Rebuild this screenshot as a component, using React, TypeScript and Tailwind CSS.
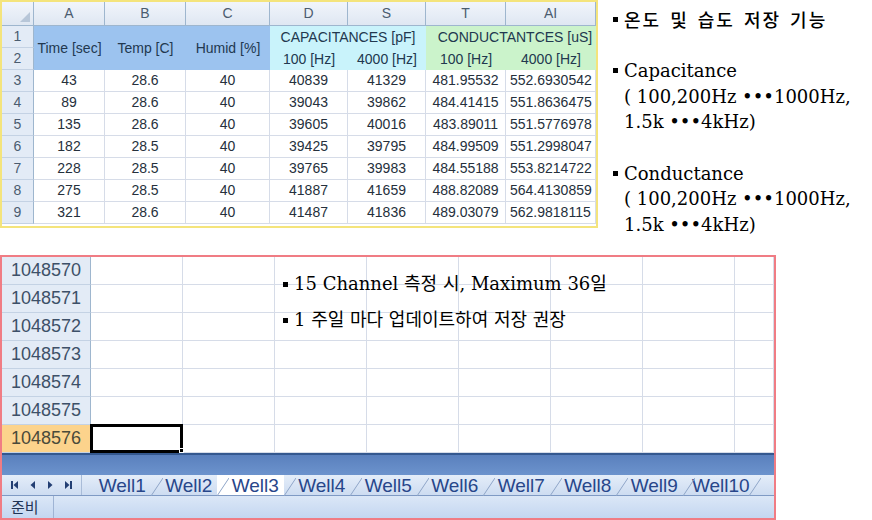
const SANS = "font-['Liberation_Sans',Arial,sans-serif]";

const TOP_ROWS = [
  ["3", "43", "28.6", "40", "40839", "41329", "481.95532", "552.6930542"],
  ["4", "89", "28.6", "40", "39043", "39862", "484.41415", "551.8636475"],
  ["5", "135", "28.6", "40", "39605", "40016", "483.89011", "551.5776978"],
  ["6", "182", "28.5", "40", "39425", "39795", "484.99509", "551.2998047"],
  ["7", "228", "28.5", "40", "39765", "39983", "484.55188", "553.8214722"],
  ["8", "275", "28.5", "40", "41887", "41659", "488.82089", "564.4130859"],
  ["9", "321", "28.6", "40", "41487", "41836", "489.03079", "562.9818115"],
];

const BOTTOM_ROWS = ["1048570", "1048571", "1048572", "1048573", "1048574", "1048575", "1048576"];

const TABS = ["Well1", "Well2", "Well3", "Well4", "Well5", "Well6", "Well7", "Well8", "Well9", "Well10"];

function Bullet() {
  return <span className="mr-[6px] inline-block h-[5px] w-[5px] shrink-0 bg-black" />;
}

function TopSheet() {
  const colHead = "flex items-center justify-center border-r border-b border-[#9eb6ce] bg-gradient-to-b from-[#f1f5fb] to-[#dfe7f2] text-[14px] text-[#4b5c70]";
  const rowHead = "flex items-center justify-center border-r border-b border-r-[#9eb6ce] border-b-[#c4d2e4] bg-[#e3ebf6] text-[14px] text-[#4b5c70]";
  const cell = "flex items-center justify-center border-r border-b border-[#d6dce8] bg-white text-[14px] text-[#25303c]";
  const head = "flex items-center justify-center text-[14px] text-[#22384f]";
  return (
    <div
      className={`grid h-[228px] w-[598px] shrink-0 grid-cols-[32px_71px_81px_84px_78px_78px_80px_90px] grid-rows-[24px_repeat(9,22px)] overflow-hidden border-2 border-[#f4e47c] ${SANS}`}
    >
      <div className={`${colHead} relative`}>
        <svg width="10" height="10" viewBox="0 0 10 10" className="absolute right-[3px] bottom-[3px]">
          <polygon points="10,0 10,10 0,10" fill="#b7c6d8" />
        </svg>
      </div>
      {["A", "B", "C", "D", "S", "T", "AI"].map((c) => (
        <div key={c} className={colHead}>
          {c}
        </div>
      ))}

      <div className={rowHead}>1</div>
      <div className={`${head} row-span-2 bg-[#9cc3ef]`}>Time [sec]</div>
      <div className={`${head} row-span-2 bg-[#9cc3ef]`}>Temp [C]</div>
      <div className={`${head} row-span-2 bg-[#9cc3ef]`}>Humid [%]</div>
      <div className={`${head} col-span-2 bg-[#c9f3fb]`}>CAPACITANCES [pF]</div>
      <div className={`${head} col-span-2 overflow-hidden whitespace-nowrap bg-[#cbf3cb] pl-[8px]`}>CONDUCTANTCES [uS]</div>

      <div className={rowHead}>2</div>
      <div className={`${head} bg-[#c9f3fb]`}>100 [Hz]</div>
      <div className={`${head} bg-[#c9f3fb]`}>4000 [Hz]</div>
      <div className={`${head} bg-[#cbf3cb]`}>100 [Hz]</div>
      <div className={`${head} bg-[#cbf3cb]`}>4000 [Hz]</div>

      {TOP_ROWS.map((row) =>
        row.map((v, i) => (
          <div key={row[0] + "-" + i} className={i === 0 ? rowHead : cell + (i === 7 ? " justify-start pl-[4px]" : "")}>
            {v}
          </div>
        )),
      )}
    </div>
  );
}

function NoteBlock({ title }: { title: string }) {
  return (
    <div className="mt-[25.6px] flex">
      <div className="flex h-[25.6px] items-center">
        <Bullet />
      </div>
      <div className="flex flex-col leading-[25.6px]">
        <span>{title}</span>
        <span className="whitespace-nowrap">( 100,200Hz •••1000Hz,</span>
        <span>1.5k •••4kHz)</span>
      </div>
    </div>
  );
}

function NotesPanel() {
  return (
    <div className="flex flex-col pl-[15px] pt-[7px] font-['DejaVu_Serif','Noto_Sans_CJK_KR',serif] text-[18px] text-black">
      <div className="flex h-[25.6px] items-center">
        <Bullet />
        <span className="font-['Noto_Sans_CJK_KR',sans-serif] text-[18px] font-medium tracking-[2px] [word-spacing:3px]">
          온도 및 습도 저장 기능
        </span>
      </div>
      <NoteBlock title="Capacitance" />
      <NoteBlock title="Conductance" />
    </div>
  );
}

function NavIcon({ kind }: { kind: "first" | "prev" | "next" | "last" }) {
  return (
    <svg width="10" height="10" viewBox="0 0 10 10">
      {kind === "first" && (
        <>
          <rect x="1" y="1" width="2" height="8" fill="#233f73" />
          <polygon points="8,1 8,9 3.5,5" fill="#233f73" />
        </>
      )}
      {kind === "prev" && <polygon points="7,1 7,9 2.5,5" fill="#233f73" />}
      {kind === "next" && <polygon points="3,1 3,9 7.5,5" fill="#233f73" />}
      {kind === "last" && (
        <>
          <polygon points="2,1 2,9 6.5,5" fill="#233f73" />
          <rect x="7" y="1" width="2" height="8" fill="#233f73" />
        </>
      )}
    </svg>
  );
}

function TabSlash({ color }: { color: string }) {
  return (
    <svg width="12" height="21" viewBox="0 0 12 21" className="absolute top-0 left-0">
      <line x1="0" y1="21" x2="12" y2="3" stroke={color} strokeWidth="1" />
    </svg>
  );
}

function BottomSheet() {
  return (
    <div className={`flex h-[265px] w-[776px] flex-col overflow-hidden border-2 border-[#f07c84] ${SANS}`}>
      <div className="relative grid grid-cols-[89px_repeat(7,92px)_1fr] grid-rows-[repeat(7,28px)]">
        {BOTTOM_ROWS.map((r, ri) => (
          <div key={r} className="contents">
            <div
              className={
                "flex items-center justify-center border-r border-b border-r-[#9eb6ce] border-b-[#c4d2e4] text-[18px] " +
                (ri === 6 ? "bg-[#fcd38c] text-[#4a4a3a]" : "bg-[#e3ebf6] text-[#3d5068]")
              }
            >
              {r}
            </div>
            {Array.from({ length: 8 }).map((_, ci) => (
              <div key={ci} className="relative border-r border-b border-[#d6dce8] bg-white">
                {ri === 6 && ci === 0 && (
                  <div className="absolute -top-px -left-px right-[-1px] bottom-[-1px] z-10 border-[3px] border-black">
                    <div className="absolute right-[-4px] bottom-[-3px] h-[5px] w-[5px] border border-white bg-black" />
                  </div>
                )}
              </div>
            ))}
          </div>
        ))}
        <div className="absolute top-[13px] left-[281px] flex flex-col gap-[8px] font-['DejaVu_Serif','Noto_Sans_CJK_KR',serif] text-[18px] leading-[28px] text-black">
          <div className="flex items-center whitespace-nowrap">
            <Bullet />
            <span>15 Channel 측정 시, Maximum 36일</span>
          </div>
          <div className="flex items-center whitespace-nowrap">
            <Bullet />
            <span>1 주일 마다 업데이트하여 저장 권장</span>
          </div>
        </div>
      </div>

      <div className="h-[22px] shrink-0 border-t-2 border-[#34588f] bg-gradient-to-b from-[#5a80bd] to-[#6c93cd]" />

      <div className="flex h-[21px] shrink-0 items-stretch border-b border-[#7f9ac4] bg-gradient-to-b from-[#e4edf9] to-[#cddcf1]">
        <div className="flex w-[80px] items-center justify-around border-r border-[#a9bcd8] px-[4px]">
          <NavIcon kind="first" />
          <NavIcon kind="prev" />
          <NavIcon kind="next" />
          <NavIcon kind="last" />
        </div>
        <div className="flex items-stretch pl-[2px]">
          {TABS.map((t, i) => (
            <div
              key={t}
              className={
                "relative flex w-[66.5px] items-center justify-center pl-[10px] text-[19px] leading-none text-[#27468a] " +
                (t === "Well3" ? "bg-white" : "")
              }
            >
              <TabSlash color={i === 0 ? "transparent" : "#8fa6c8"} />
              {t}
            </div>
          ))}
          <div className="relative w-[20px]">
            <TabSlash color="#8fa6c8" />
          </div>
        </div>
      </div>

      <div className="flex flex-1 items-stretch bg-gradient-to-b from-[#dbe7f7] to-[#c3d6f0]">
        <div className="flex w-[52px] items-center border-r border-[#9fb4d4] pl-[9px] font-['Noto_Sans_CJK_KR',sans-serif] text-[15px] text-[#1f3455]">
          준비
        </div>
      </div>
    </div>
  );
}

export default function App() {
  return (
    <div className="flex h-[520px] w-[872px] flex-col overflow-hidden bg-white">
      <div className="flex h-[228px] shrink-0">
        <TopSheet />
        <NotesPanel />
      </div>
      <div className="mt-[27px]">
        <BottomSheet />
      </div>
    </div>
  );
}
